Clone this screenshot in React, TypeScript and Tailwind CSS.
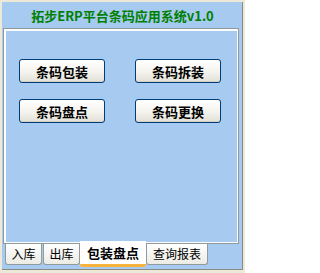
import React from "react";

const font = { fontFamily: '"Noto Sans CJK SC", "Noto Sans", sans-serif' };

function XPButton({ label }: { label: string }) {
  return (
    <button
      className="w-[86px] h-[24px] rounded-[3px] border border-[#003C74] bg-gradient-to-b from-white via-[#F5F4EF] to-[#E2E0D6] text-[13px] font-bold text-black leading-none flex items-center justify-center shadow-[inset_0_-1px_0_#D6D0C5]"
      style={font}
    >
      {label}
    </button>
  );
}

function Tab({ label, w, selected }: { label: string; w: string; selected?: boolean }) {
  if (selected) {
    return (
      <div
        className={`${w} h-[26px] -mt-[3px] relative z-10 bg-white rounded-b-[3px] border-b-[3px] border-[#F7B33B] flex items-center justify-center text-[13px] font-bold text-black leading-none`}
        style={font}
      >
        {label}
      </div>
    );
  }
  return (
    <div
      className={`${w} h-[21px] border-x border-b border-[#919B9C] rounded-b-[3px] bg-gradient-to-b from-white to-[#ECEBE4] flex items-center justify-center text-[12px] text-black leading-none`}
      style={font}
    >
      {label}
    </div>
  );
}

export default function App() {
  return (
    <div className="w-[245px] h-[273px] bg-[#ECE9D8] pt-[2px] pl-[2px] pr-[2px] pb-[3px]">
      <div className="h-full bg-[#A6CAF0] border-r border-b border-[#8A8A84] flex flex-col pl-[1px]">
        <div
          className="h-[26px] flex items-center justify-center text-[13px] font-bold text-[#008000] leading-none"
          style={font}
        >
          拓步ERP平台条码应用系统v1.0
        </div>
        <div className="w-[236px] h-[216px] border border-[#919B9C] flex">
          <div className="flex-1 border-l-2 border-t-2 border-r border-b border-[#FCFCFE] bg-[#A6CAF0] pl-[13px] pt-[28px]">
            <div className="grid grid-cols-[86px_86px] gap-x-[30px] gap-y-[16px]">
              <XPButton label="条码包装" />
              <XPButton label="条码拆装" />
              <XPButton label="条码盘点" />
              <XPButton label="条码更换" />
            </div>
          </div>
        </div>
        <div className="flex items-start pl-[2px]">
          <Tab label="入库" w="w-[37px]" />
          <div className="w-[1px]" />
          <Tab label="出库" w="w-[37px]" />
          <Tab label="包装盘点" w="w-[66px]" selected />
          <Tab label="查询报表" w="w-[62px]" />
        </div>
      </div>
    </div>
  );
}
